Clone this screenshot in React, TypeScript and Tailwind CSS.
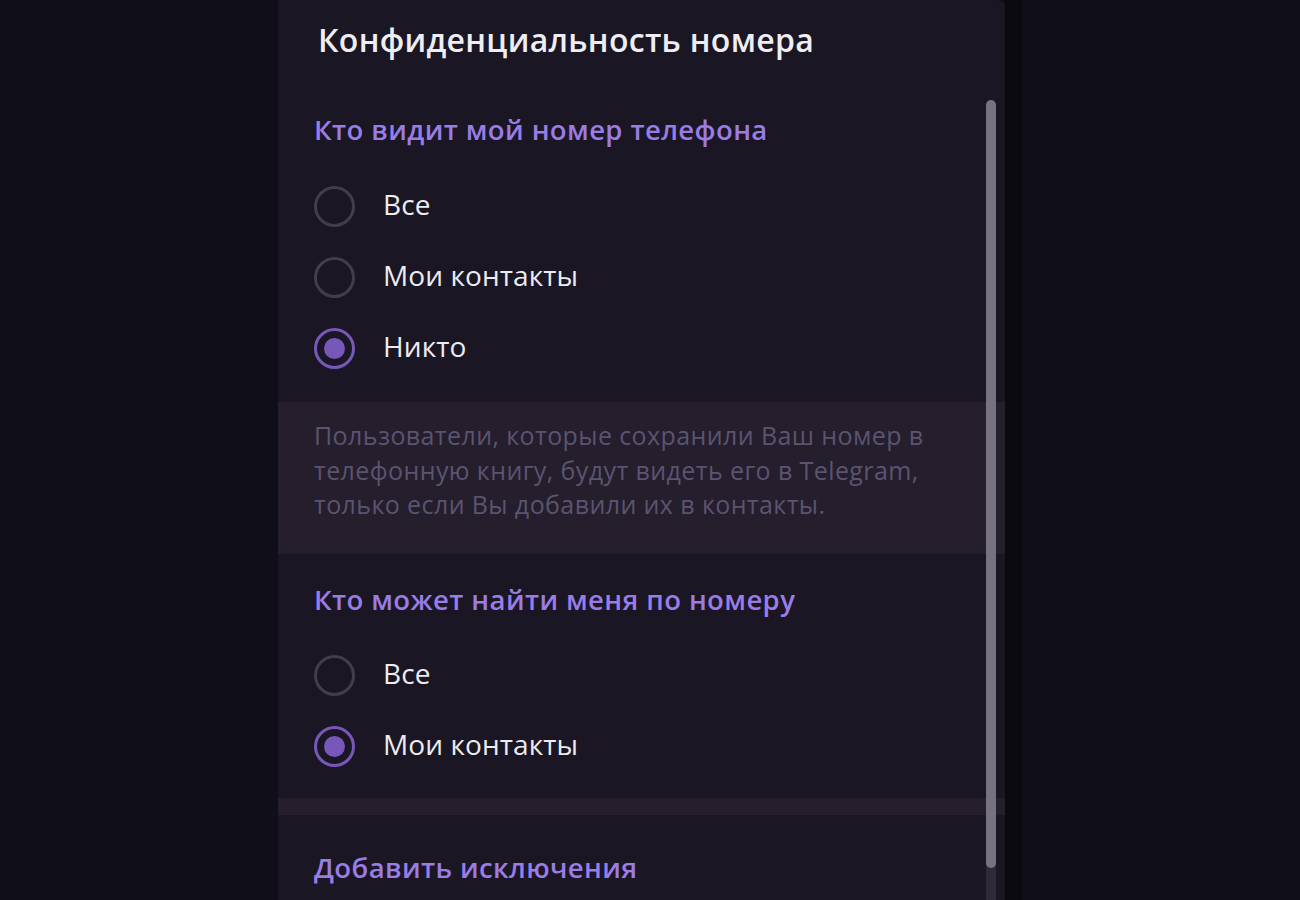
import React from "react";

function Radio({ label, checked }: { label: string; checked?: boolean }) {
  return (
    <div className="flex items-center h-[71px]">
      <div
        className={
          checked
            ? "w-[41px] h-[41px] rounded-full border-[3px] border-[#7757b8] flex items-center justify-center"
            : "w-[41px] h-[41px] rounded-full border-[3px] border-[#433c50]"
        }
      >
        {checked && <div className="w-[21px] h-[21px] rounded-full bg-[#7757b8]" />}
      </div>
      <span className="ml-[28px] mb-[6px] text-[28px] tracking-[0.1px] text-[#ecebf0] leading-none">{label}</span>
    </div>
  );
}

export default function App() {
  return (
    <div
      className="w-[1300px] h-[900px] overflow-hidden flex bg-[#100f19]"
      style={{ fontFamily: '"Open Sans", "Noto Sans", sans-serif' }}
    >
      <div className="w-[278px] shrink-0" />
      <div className="relative w-[727px] shrink-0 h-full bg-[#1a1624] rounded-tr-[6px]">
        <div className="pt-[20px] pl-[40px] h-[88px]">
          <h1 className="text-[32px] tracking-[0.3px] font-semibold text-[#eeedf2] leading-[40px]">
            Конфиденциальность номера
          </h1>
        </div>
        <div className="pl-[36px]">
          <div className="h-[83px] flex items-center">
            <h2 className="text-[27.5px] tracking-[0.4px] font-semibold text-[#9a7ce6] leading-none">
              Кто видит мой номер телефона
            </h2>
          </div>
          <Radio label="Все" />
          <Radio label="Мои контакты" />
          <Radio label="Никто" checked />
        </div>
        <div className="mt-[18px] bg-[#241e2d] h-[152px] pl-[36px] pr-[40px] pt-[16px]">
          <p className="text-[25px] tracking-[0.4px] leading-[34.5px] text-[#5b5470]">
            Пользователи, которые сохранили Ваш номер в телефонную книгу, будут видеть его в Telegram,
            только если Вы добавили их в контакты.
          </p>
        </div>
        <div className="pl-[36px]">
          <div className="h-[86px] pt-[6px] flex items-center">
            <h2 className="text-[27.5px] tracking-[0.4px] font-semibold text-[#9a7ce6] leading-none">
              Кто может найти меня по номеру
            </h2>
          </div>
          <Radio label="Все" />
          <Radio label="Мои контакты" checked />
        </div>
        <div className="mt-[16px] h-[17px] bg-[#241e2d]" />
        <div className="pl-[36px] h-[106px] flex items-center">
          <h2 className="text-[27.5px] tracking-[0.4px] font-semibold text-[#9a7ce6] leading-none">
            Добавить исключения
          </h2>
        </div>
        <div className="absolute left-[708px] top-[864px] w-[10px] h-[40px] bg-[#2e2a38]" />
        <div className="absolute left-[708px] top-[100px] w-[10px] h-[768px] rounded-full bg-[#76727f]" />
      </div>
      <div className="w-[17px] shrink-0 h-full bg-[#0b0a0f]" />
      <div className="flex-1" />
    </div>
  );
}
